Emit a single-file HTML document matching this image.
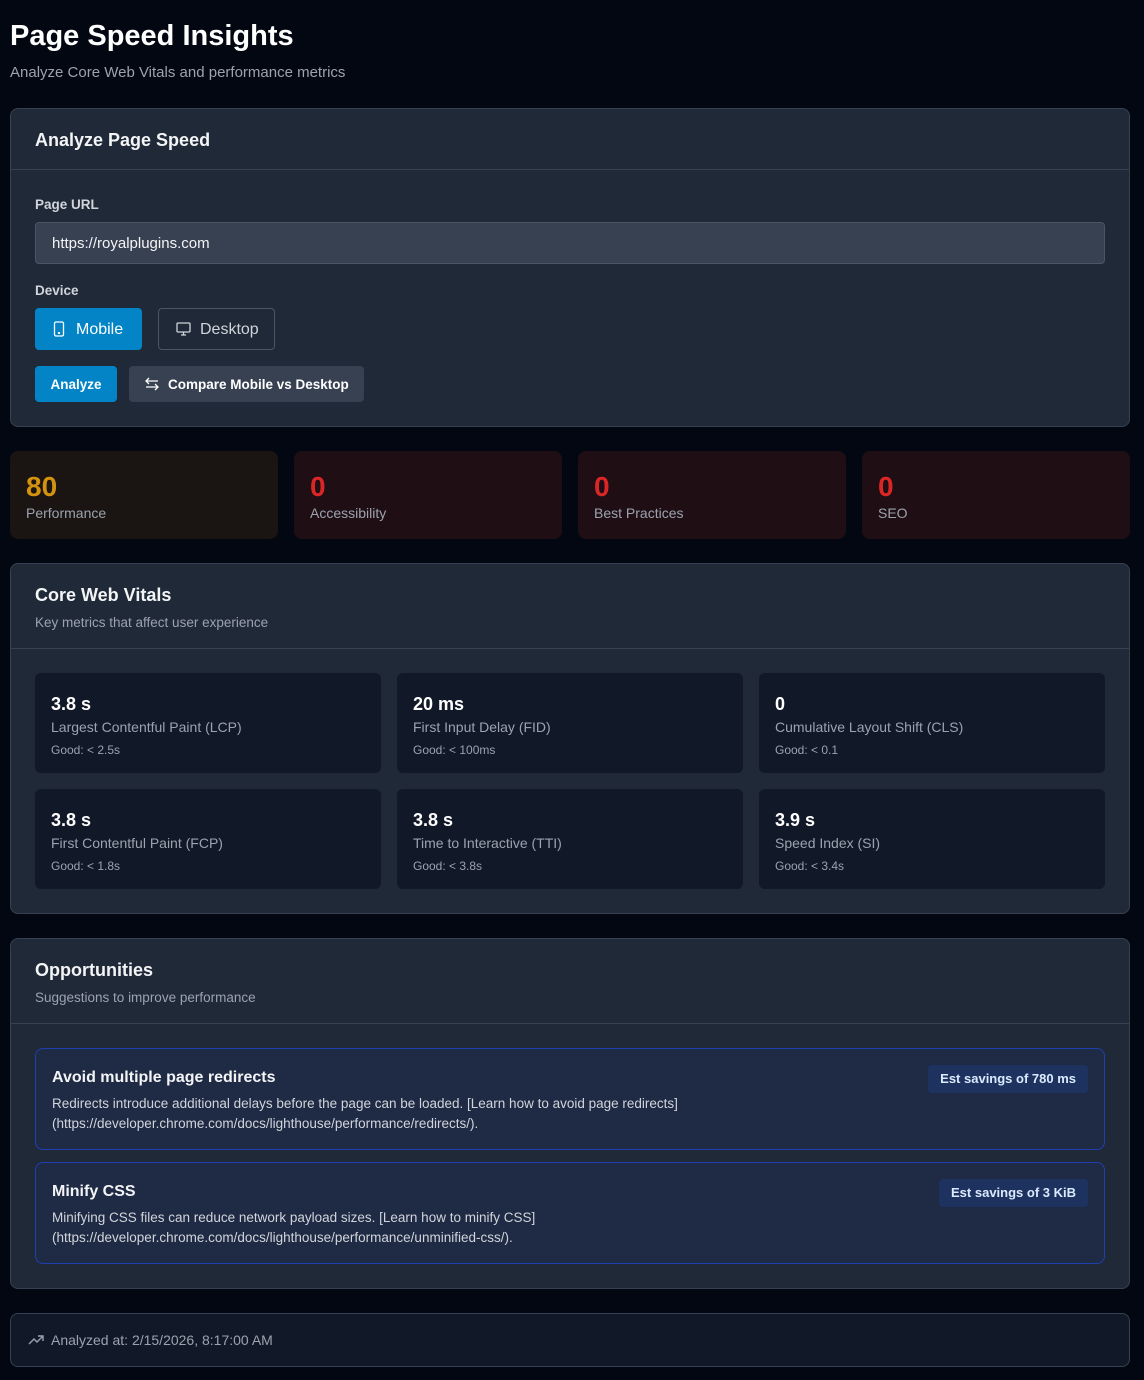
<!DOCTYPE html>
<html><head><meta charset="utf-8"><style>
*{box-sizing:border-box;margin:0;padding:0}
body{width:1144px;height:1380px;background:#030712;font-family:"Liberation Sans",sans-serif;color:#f3f4f6;position:relative;overflow:hidden}
.a{position:absolute;white-space:nowrap}
.card{position:absolute;background:#1f2937;border:1px solid #374151;border-radius:8px}
.sep{position:absolute;left:0;right:0;height:1px;background:#374151}
.sc{position:absolute;top:451px;width:268px;height:88px;border-radius:8px;background:#1f0f14}
.sc .n{position:absolute;left:16px;top:20px;font-size:28px;font-weight:bold;color:#dc2626}
.sc .l{position:absolute;left:16px;top:54px;font-size:14px;color:#9ca3af}
.m{position:absolute;width:346px;height:100px;background:#111827;border-radius:6px}
.m .v{position:absolute;left:16px;top:21px;font-size:18px;font-weight:bold;color:#fff}
.m .l{position:absolute;left:16px;top:46px;font-size:14px;color:#9ca3af}
.m .g{position:absolute;left:16px;top:70px;font-size:12px;color:#9ca3af}
.op{position:absolute;left:35px;width:1070px;height:102px;background:#1f2a44;border:1px solid #1e40af;border-radius:8px}
.op .t{position:absolute;left:16px;top:20px;font-size:16px;font-weight:bold;color:#f3f4f6}
.op .d{position:absolute;left:16px;top:45px;font-size:13.5px;line-height:20px;color:#d1d5db}
.op .b{position:absolute;right:16px;top:16px;height:28px;padding:0 12px;line-height:28px;font-size:13px;font-weight:bold;color:#dbeafe;background:#1e3260;border-radius:4px}
</style></head><body>
<div class="a" style="left:10px;top:20px;font-size:29px;font-weight:bold;color:#fff">Page Speed Insights</div>
<div class="a" style="left:10px;top:64px;font-size:15px;color:#9ca3af">Analyze Core Web Vitals and performance metrics</div>

<div class="card" style="left:10px;top:108px;width:1120px;height:319px">
 <div class="a" style="left:24px;top:21px;font-size:18px;font-weight:bold">Analyze Page Speed</div>
 <div class="sep" style="top:60px"></div>
 <div class="a" style="left:24px;top:88px;font-size:13.5px;font-weight:bold;color:#d1d5db">Page URL</div>
 <div class="a" style="left:24px;top:113px;width:1070px;height:42px;background:#374151;border:1px solid #4b5563;border-radius:4px;padding:0 16px;line-height:42px;font-size:15px;color:#f3f4f6">https://royalplugins.com</div>
 <div class="a" style="left:24px;top:174px;font-size:13.5px;font-weight:bold;color:#d1d5db">Device</div>
 <div class="a" style="left:24px;top:199px;width:107px;height:42px;background:#0284c7;border-radius:4px;font-size:16px;color:#fff;line-height:44px;padding-left:41px">Mobile
  <svg style="position:absolute;left:18px;top:13px" width="12" height="16" viewBox="0 0 12 16" fill="none" stroke="#fff" stroke-width="1.3"><rect x="1.5" y="1" width="9" height="14" rx="1.5"/><circle cx="6" cy="12" r=".5" fill="#fff"/></svg></div>
 <div class="a" style="left:147px;top:199px;width:117px;height:42px;border:1px solid #4b5563;border-radius:4px;font-size:16px;color:#d1d5db;line-height:42px;padding-left:41px">Desktop
  <svg style="position:absolute;left:17px;top:13px" width="15" height="14" viewBox="0 0 15 14" fill="none" stroke="#d1d5db" stroke-width="1.3"><rect x="1" y="1" width="13" height="9" rx="1"/><path d="M5 13h5M7.5 10v3"/></svg></div>
 <div class="a" style="left:24px;top:257px;width:82px;height:36px;background:#0284c7;border-radius:4px;font-size:13.5px;font-weight:bold;color:#fff;line-height:38px;text-align:center">Analyze</div>
 <div class="a" style="left:118px;top:257px;width:235px;height:36px;background:#374151;border-radius:4px;font-size:13.5px;font-weight:bold;color:#fff;line-height:38px;padding-left:39px">Compare Mobile vs Desktop
  <svg style="position:absolute;left:16px;top:11px" width="14" height="14" viewBox="0 0 14 14" fill="none" stroke="#fff" stroke-width="1.3"><path d="M1 4h12M4 1L1 4l3 3M13 10H1M10 7l3 3-3 3"/></svg></div>
</div>

<div class="sc" style="left:10px;background:#1a1512"><div class="n" style="color:#d4930c">80</div><div class="l">Performance</div></div>
<div class="sc" style="left:294px"><div class="n">0</div><div class="l">Accessibility</div></div>
<div class="sc" style="left:578px"><div class="n">0</div><div class="l">Best Practices</div></div>
<div class="sc" style="left:862px"><div class="n">0</div><div class="l">SEO</div></div>

<div class="card" style="left:10px;top:563px;width:1120px;height:351px">
 <div class="a" style="left:24px;top:21px;font-size:18px;font-weight:bold">Core Web Vitals</div>
 <div class="a" style="left:24px;top:51px;font-size:13.5px;color:#9ca3af">Key metrics that affect user experience</div>
 <div class="sep" style="top:84px"></div>
</div>
<div class="m" style="left:35px;top:673px"><div class="v">3.8 s</div><div class="l">Largest Contentful Paint (LCP)</div><div class="g">Good: &lt; 2.5s</div></div>
<div class="m" style="left:397px;top:673px"><div class="v">20 ms</div><div class="l">First Input Delay (FID)</div><div class="g">Good: &lt; 100ms</div></div>
<div class="m" style="left:759px;top:673px"><div class="v">0</div><div class="l">Cumulative Layout Shift (CLS)</div><div class="g">Good: &lt; 0.1</div></div>
<div class="m" style="left:35px;top:789px"><div class="v">3.8 s</div><div class="l">First Contentful Paint (FCP)</div><div class="g">Good: &lt; 1.8s</div></div>
<div class="m" style="left:397px;top:789px"><div class="v">3.8 s</div><div class="l">Time to Interactive (TTI)</div><div class="g">Good: &lt; 3.8s</div></div>
<div class="m" style="left:759px;top:789px"><div class="v">3.9 s</div><div class="l">Speed Index (SI)</div><div class="g">Good: &lt; 3.4s</div></div>

<div class="card" style="left:10px;top:938px;width:1120px;height:351px">
 <div class="a" style="left:24px;top:21px;font-size:18px;font-weight:bold">Opportunities</div>
 <div class="a" style="left:24px;top:51px;font-size:13.5px;color:#9ca3af">Suggestions to improve performance</div>
 <div class="sep" style="top:84px"></div>
</div>
<div class="op" style="top:1048px"><div class="t">Avoid multiple page redirects</div><div class="d">Redirects introduce additional delays before the page can be loaded. [Learn how to avoid page redirects]<br>(https://developer.chrome.com/docs/lighthouse/performance/redirects/).</div><div class="b">Est savings of 780 ms</div></div>
<div class="op" style="top:1162px"><div class="t">Minify CSS</div><div class="d">Minifying CSS files can reduce network payload sizes. [Learn how to minify CSS]<br>(https://developer.chrome.com/docs/lighthouse/performance/unminified-css/).</div><div class="b">Est savings of 3 KiB</div></div>

<div class="card" style="left:10px;top:1313px;width:1120px;height:54px;background:#111827">
 <svg style="position:absolute;left:17px;top:20px" width="16" height="12" viewBox="0 0 16 12" fill="none" stroke="#9ca3af" stroke-width="1.4"><path d="M1 10l5-5 3 3 6-6M10 2h5v5"/></svg>
 <div class="a" style="left:40px;top:18px;font-size:14px;color:#9ca3af">Analyzed at: 2/15/2026, 8:17:00 AM</div>
</div>
</body></html>
